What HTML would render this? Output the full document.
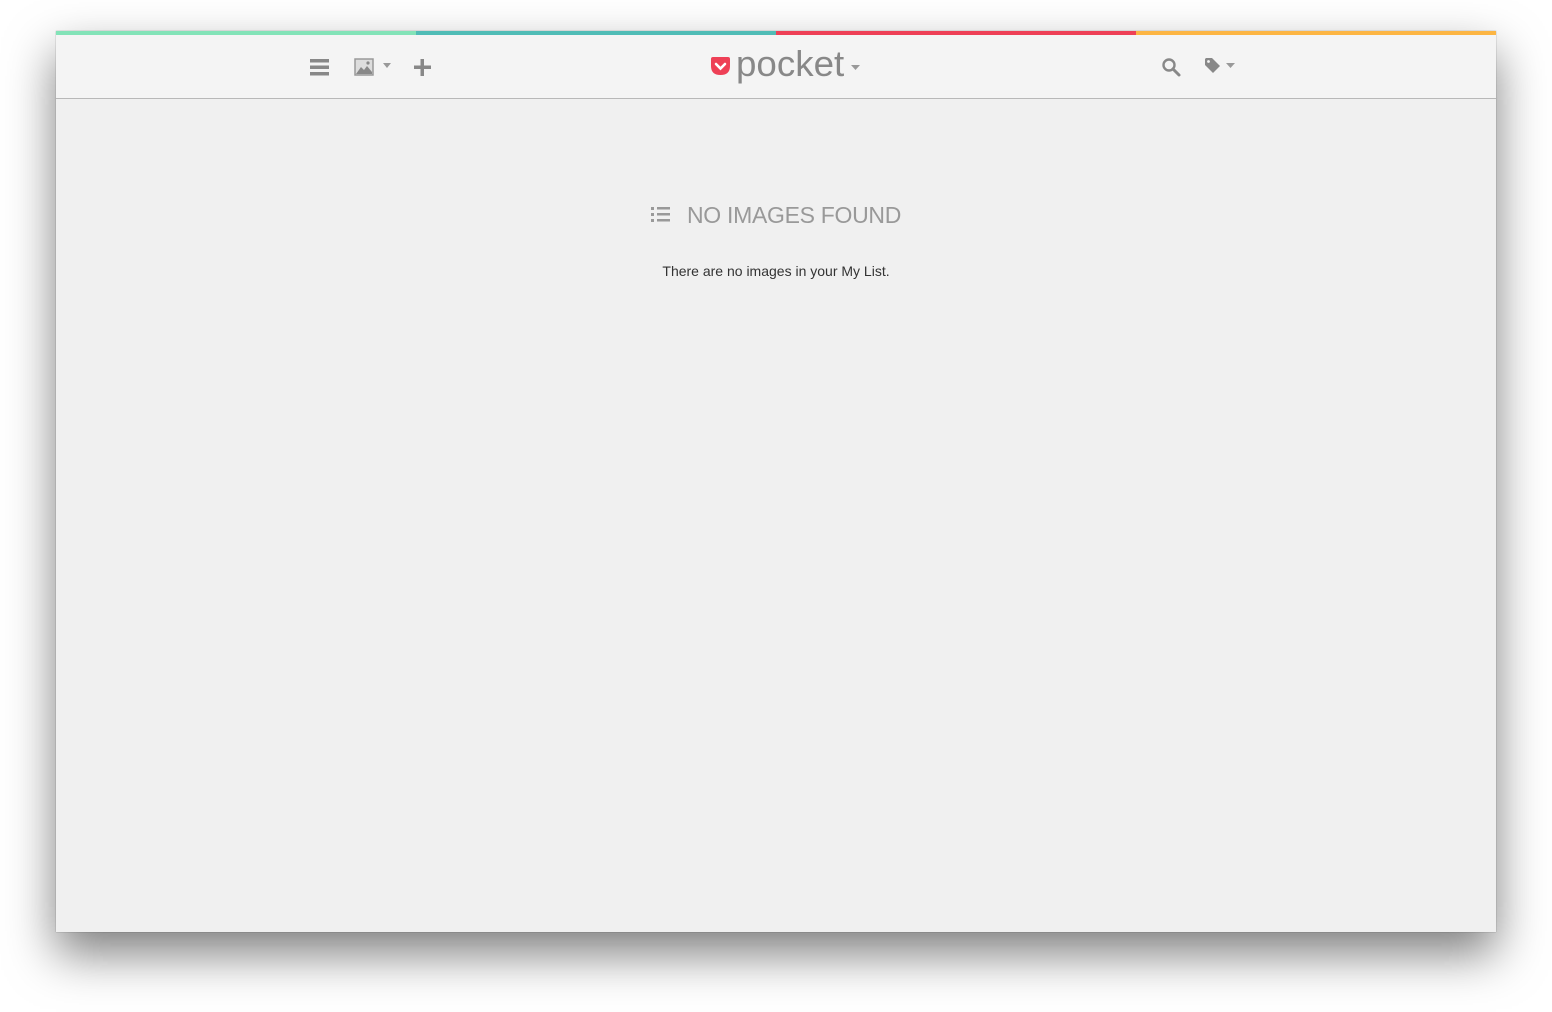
<!DOCTYPE html>
<html><head><meta charset="utf-8"><style>
html,body{margin:0;padding:0;width:1552px;height:1012px;background:#fff;overflow:hidden;font-family:"Liberation Sans",sans-serif}
#win{position:absolute;left:56px;top:31px;width:1440px;height:901px;background:#f0f0f0;box-shadow:0 22px 45px rgba(0,0,0,.5),0 0 1px rgba(0,0,0,.4)}
#bar{position:absolute;left:0;top:0;width:1440px;height:4px;display:flex}
#bar div{flex:1}
#hdr{position:absolute;left:0;top:4px;width:1440px;height:63px;background:#f4f4f4;border-bottom:1px solid #b8b8b8}
.ic{position:absolute}
h1{position:absolute;left:631px;top:171px;margin:0;font-weight:normal;font-size:23px;color:#999;letter-spacing:-0.3px}
p{position:absolute;left:0;width:1440px;top:232px;text-align:center;margin:0;font-size:14px;color:#333}
</style></head><body>
<div id="win">
<div id="bar"><div style="background:#83e3b8"></div><div style="background:#50bcb6"></div><div style="background:#ee4056"></div><div style="background:#fcb543"></div></div>
<div id="hdr">
<svg class="ic" style="left:254px;top:24px" width="20" height="18"><rect x="0" y="0" width="19" height="3.5" fill="#888"/><rect x="0" y="6.5" width="19" height="3.5" fill="#888"/><rect x="0" y="13" width="19" height="3.5" fill="#888"/></svg>
<svg class="ic" style="left:298px;top:23px" width="40" height="20"><rect x="1" y="1" width="18" height="16" fill="#ddd" stroke="#999" stroke-width="1.5"/><path d="M2 16 L7 9 L10 12 L13 8 L18 14 L18 16Z" fill="#888"/><circle cx="14" cy="5" r="1.6" fill="#888"/><path d="M29 5 L37 5 L33 10Z" fill="#999"/></svg>
<svg class="ic" style="left:357px;top:23px" width="20" height="20"><rect x="7.5" y="1" width="3.5" height="17" fill="#888"/><rect x="1" y="7.5" width="17" height="3.5" fill="#888"/></svg>
<svg class="ic" style="left:654px;top:21px" width="22" height="22"><path d="M1 3 Q1 1 3 1 L18 1 Q20 1 20 3 L20 10 Q20 19 10.5 19 Q1 19 1 10Z" fill="#ee4056"/><path d="M6 8 L10.5 12.5 L15 8" stroke="#fff" stroke-width="2.6" fill="none" stroke-linecap="round"/></svg>
<div class="ic" style="left:680px;top:7px;font-size:36px;color:#888;letter-spacing:0px;line-height:44px;transform:scaleX(1.02);transform-origin:left">pocket</div>
<svg class="ic" style="left:794px;top:29px" width="12" height="8"><path d="M1 1 L10 1 L5.5 6Z" fill="#999"/></svg>
<svg class="ic" style="left:1105px;top:22px" width="22" height="22"><circle cx="8" cy="8" r="5.5" stroke="#888" stroke-width="2.4" fill="none"/><path d="M12 12 L18 18" stroke="#888" stroke-width="3" stroke-linecap="round"/></svg>
<svg class="ic" style="left:1148px;top:22px" width="36" height="20"><path d="M1 2 L1 8 L9 16 L16 9 L8 1 L2 1Z" fill="#888"/><circle cx="4.5" cy="4.5" r="1.4" fill="#f4f4f4"/><path d="M22 6 L31 6 L26.5 11Z" fill="#999"/></svg>
</div>
<svg class="ic" style="left:595px;top:175px" width="20" height="18"><g fill="#999"><rect x="0" y="1" width="3" height="3"/><rect x="0" y="7" width="3" height="3"/><rect x="0" y="13" width="3" height="3"/><rect x="6" y="1" width="13" height="2.5"/><rect x="6" y="7" width="13" height="2.5"/><rect x="6" y="13" width="13" height="2.5"/></g></svg>
<h1>NO IMAGES FOUND</h1>
<p>There are no images in your My List.</p>
</div>
</body></html>
